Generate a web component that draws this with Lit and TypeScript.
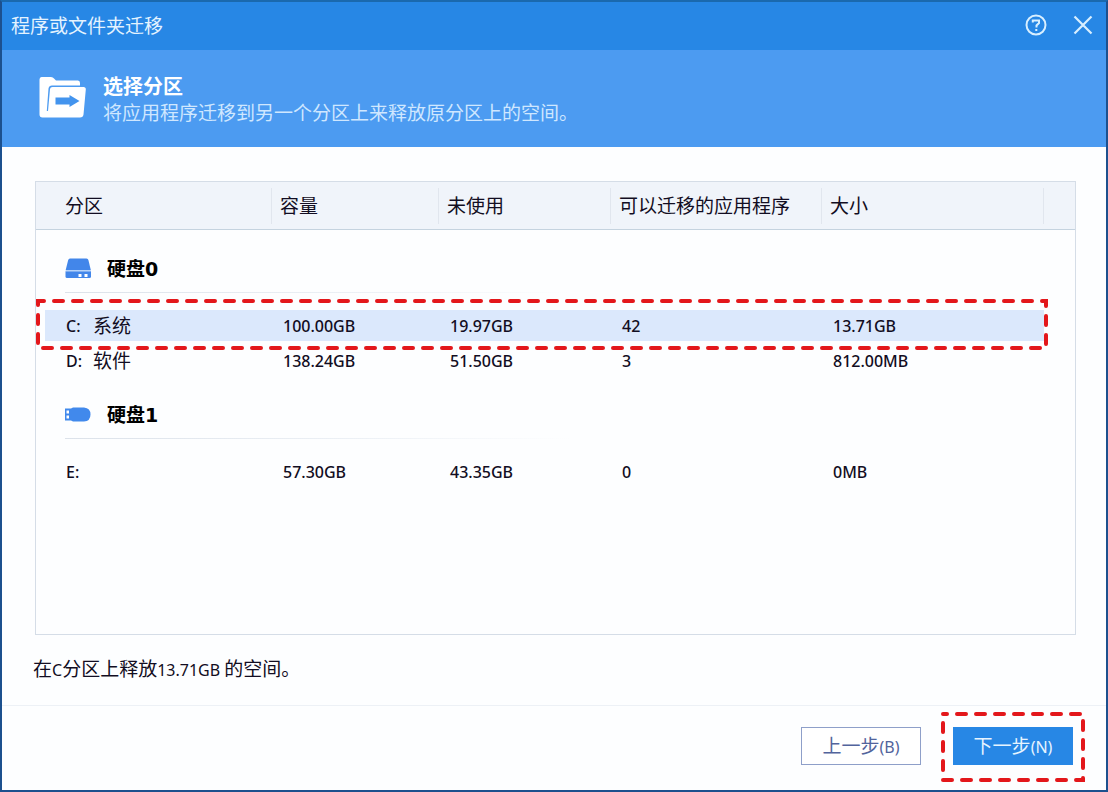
import { LitElement, html, css, svg } from "lit";
import { customElement, property, state } from "lit/decorators.js";

interface Volume {
  letter: string;
  label: string;
  capacity: string;
  unused: string;
  apps: string;
  size: string;
}

interface Disk {
  name: string;
  kind: "internal" | "removable";
  volumes: Volume[];
}

const DISKS: Disk[] = [
  {
    name: "硬盘0",
    kind: "internal",
    volumes: [
      { letter: "C:", label: "系统", capacity: "100.00GB", unused: "19.97GB", apps: "42", size: "13.71GB" },
      { letter: "D:", label: "软件", capacity: "138.24GB", unused: "51.50GB", apps: "3", size: "812.00MB" },
    ],
  },
  {
    name: "硬盘1",
    kind: "removable",
    volumes: [{ letter: "E:", label: "", capacity: "57.30GB", unused: "43.35GB", apps: "0", size: "0MB" }],
  },
];

/* Dashed red frame that surrounds whatever it is placed in. */
@customElement("dashed-frame")
export class DashedFrame extends LitElement {
  @property({ type: Number }) phase = 0;

  static styles = css`
    :host {
      display: block;
      pointer-events: none;
    }
    .frame {
      display: block;
      width: 100%;
      height: 100%;
      overflow: visible;
    }
    .line {
      fill: none;
      stroke: #e3171b;
      stroke-width: 4;
      stroke-linecap: round;
      stroke-dasharray: 9 10;
    }
  `;

  render() {
    return html`<svg class="frame" aria-hidden="true">
      ${svg`<rect class="line" width="100%" height="100%" stroke-dashoffset=${this.phase} />`}
    </svg>`;
  }
}

@customElement("app-root")
export class AppRoot extends LitElement {
  @state() private selected = "C:";

  static styles = css`
    :host {
      display: block;
      font-family: "Noto Sans", "Noto Sans CJK SC", sans-serif;
      font-size: 19px;
      line-height: 24px;
      color: #120d22;
    }
    .window {
      box-sizing: border-box;
      min-height: 100vh;
      display: flex;
      flex-direction: column;
      background: #fdfeff;
      border: 2px solid #1c508e;
      border-top-color: #1a69ae;
    }
    .titlebar {
      height: 48px;
      display: flex;
      align-items: center;
      justify-content: space-between;
      padding: 0 9px;
      background: #2787e5;
      color: #e4f3ff;
    }
    .title {
      margin: 0;
      font-size: 19px;
      font-weight: 400;
    }
    .tools {
      display: flex;
      gap: 19px;
      padding-bottom: 2px;
    }
    .tool {
      width: 28px;
      height: 28px;
      padding: 0;
      border: 0;
      background: none;
      color: #d8efff;
      display: grid;
      place-items: center;
    }
    .banner {
      height: 97px;
      box-sizing: border-box;
      display: flex;
      align-items: center;
      gap: 16px;
      padding: 2px 36px 0 35px;
      background: #4c9bf1;
      color: #cfe7ff;
    }
    .folder {
      padding-bottom: 6px;
    }
    .heading {
      margin: 0;
      font-size: 20px;
      line-height: 26px;
      font-weight: 700;
      color: #fff;
    }
    .lead {
      margin: 0;
      line-height: 26px;
    }
    .content {
      flex: 1;
      display: flex;
      flex-direction: column;
      padding: 34px 30px 0 33px;
    }
    .list {
      flex: 1;
      border: 1px solid #d5dde7;
    }
    .table {
      width: 100%;
      table-layout: fixed;
      border-collapse: separate;
      border-spacing: 0;
    }
    .c-name {
      width: 236px;
    }
    .c-capacity {
      width: 167px;
    }
    .c-unused {
      width: 172px;
    }
    .c-apps {
      width: 211px;
    }
    .c-end {
      width: 31px;
    }
    .head {
      height: 47px;
      padding: 0 8px;
      text-align: left;
      font-weight: 400;
      white-space: nowrap;
      background:
        linear-gradient(#e1e6ee, #e1e6ee) right center / 1px 36px no-repeat,
        #f0f4fa;
      border-bottom: 1px solid #c5d3df;
    }
    .head:first-child {
      padding-left: 29px;
    }
    .head:last-child {
      background: #f0f4fa;
    }
    .disk-cell {
      height: 76px;
      box-sizing: border-box;
      padding: 14px 0 0 29px;
      text-align: left;
      vertical-align: top;
      font-weight: 400;
    }
    .disk {
      display: flex;
      align-items: center;
      gap: 15px;
      height: 46px;
      border-bottom: 1px solid;
      border-image: linear-gradient(90deg, #dce2ea, #edf1f6 30%, transparent 50%) 1;
      font-family: "DejaVu Sans", "Noto Sans CJK SC", sans-serif;
      font-weight: 700;
      color: #000;
    }
    .spacer {
      height: 2px;
      padding: 0;
    }
    .row {
      position: relative;
    }
    .cell {
      height: 35px;
      box-sizing: border-box;
      padding: 0 11px;
      border: solid transparent;
      border-width: 2px 0;
      background-clip: padding-box;
      text-align: left;
      font-size: 16px;
      font-weight: 500;
      white-space: nowrap;
    }
    .cell:first-child {
      border-left-width: 9px;
      padding-left: 21px;
    }
    .row.selected .cell:not(:last-child) {
      background-color: #dbe8fc;
    }
    .volume {
      display: flex;
      align-items: center;
    }
    .letter {
      width: 27px;
    }
    .label {
      font-size: 19px;
      font-weight: 400;
    }
    .mark-row {
      position: absolute;
      inset: -7px 29px -5px 2px;
    }
    .status {
      margin: 0;
      padding: 22px 0 23px;
      margin-left: -2px;
    }
    .latin {
      font-size: 16px;
    }
    .footer {
      display: flex;
      justify-content: flex-end;
      gap: 32px;
      padding: 21px 33px 25px;
      border-top: 1px solid #edf1f6;
    }
    .slot {
      position: relative;
    }
    .mark-button {
      position: absolute;
      inset: -13px -10px -15px;
    }
    .button {
      width: 120px;
      height: 38px;
      box-sizing: border-box;
      padding: 0;
      border: 1px solid #8e9fc9;
      background: #fff;
      color: #52649c;
      font-family: inherit;
      font-size: 19px;
      line-height: 24px;
    }
    .button.primary {
      border-color: #2787e5;
      background: #2787e5;
      color: #e6f4ff;
    }
  `;

  private diskIcon(kind: Disk["kind"]) {
    return kind === "internal"
      ? html`<svg width="27" height="22" viewBox="0 0 27 22" aria-hidden="true">
          <path d="M5 0.500H21.500Q23 0.500 23.400 2L25.800 12H0.700L3.200 2Q3.600 0.500 5 0.500Z" fill="#4286ea" />
          <path d="M0.500 13.200H26V18.500Q26 20 24.500 20H2Q0.500 20 0.500 18.500Z" fill="#4286ea" />
          <path d="M0.700 12H25.800V13.200H0.700Z" fill="#b5d3fa" />
          <path d="M13.500 16h3v3h-3zM19.500 16h3v3h-3z" fill="#fff" />
        </svg>`
      : html`<svg width="27" height="22" viewBox="0 0 27 22" aria-hidden="true">
          <path d="M0 4.500H6L8 3.500H19Q25.500 4 25.500 10.500T19 17.500H8L6 16.500H0Z" fill="#4189ec" />
          <path d="M1.500 6.500h2.500v3h-2.500zM1.500 11.500h2.500v3h-2.500z" fill="#fff" />
        </svg>`;
  }

  private volumeRow(v: Volume) {
    const on = v.letter === this.selected;
    return html`<tr class="row ${on ? "selected" : ""}" @click=${() => (this.selected = v.letter)}>
      <td class="cell"><span class="volume"><span class="letter">${v.letter}</span><span class="label">${v.label}</span></span></td>
      <td class="cell">${v.capacity}</td>
      <td class="cell">${v.unused}</td>
      <td class="cell">${v.apps}</td>
      <td class="cell">${v.size}</td>
      <td class="cell">${on ? html`<dashed-frame class="mark-row" .phase=${3}></dashed-frame>` : ""}</td>
    </tr>`;
  }

  render() {
    return html`
      <main class="window">
        <header class="titlebar">
          <h1 class="title">程序或文件夹迁移</h1>
          <div class="tools">
            <button class="tool" type="button" aria-label="帮助">
              <svg width="22" height="22" viewBox="0 0 22 22" fill="none" stroke="currentColor" stroke-width="2" aria-hidden="true">
                <circle cx="11" cy="11" r="9.500" />
                <path d="M7.800 8.500V6.500H14V9L11.500 11.500V13.500M11.300 15V17" />
              </svg>
            </button>
            <button class="tool" type="button" aria-label="关闭">
              <svg width="20" height="20" viewBox="0 0 20 20" fill="none" stroke="currentColor" stroke-width="2.200" aria-hidden="true">
                <path d="M1.500 1.500L18.500 18.500M18.500 1.500L1.500 18.500" />
              </svg>
            </button>
          </div>
        </header>
        <section class="banner">
          <svg class="folder" width="50" height="44" viewBox="0 0 50 44" aria-hidden="true">
            <path d="M4.500 2H14Q16 2 17 3.500L19 5.500H41Q43 5.500 43 8V10.500H15Q12 10.500 11.500 13.500L9.800 36H11L13 14Q13.300 12 15.500 12H46.500Q49 12 48.800 14.500L46.500 39.500Q46.200 42.500 43 42.500H5.500Q2.500 42.500 2.500 39.500V4.500Q2.500 2 4.500 2Z" fill="#fff" />
            <path d="M18.500 22.500H32.500V20L42.500 26L32.500 32V29.500H18.500Z" fill="#4394ee" />
          </svg>
          <div>
            <h2 class="heading">选择分区</h2>
            <p class="lead">将应用程序迁移到另一个分区上来释放原分区上的空间。</p>
          </div>
        </section>
        <section class="content">
          <div class="list">
            <table class="table">
              <colgroup>
                <col class="c-name" />
                <col class="c-capacity" />
                <col class="c-unused" />
                <col class="c-apps" />
                <col />
                <col class="c-end" />
              </colgroup>
              <thead>
                <tr>
                  <th class="head" scope="col">分区</th>
                  <th class="head" scope="col">容量</th>
                  <th class="head" scope="col">未使用</th>
                  <th class="head" scope="col">可以迁移的应用程序</th>
                  <th class="head" scope="col">大小</th>
                  <td class="head"></td>
                </tr>
              </thead>
              <tbody>
                <tr><td class="spacer" colspan="6"></td></tr>
                ${DISKS.map(
                  (d) => html`<tr>
                      <th class="disk-cell" colspan="6" scope="rowgroup">
                        <div class="disk">${this.diskIcon(d.kind)}<span>${d.name}</span></div>
                      </th>
                    </tr>
                    ${d.volumes.map((v) => this.volumeRow(v))}`
                )}
              </tbody>
            </table>
          </div>
          <p class="status">在<span class="latin">C</span>分区上释放<span class="latin">13.71GB </span>的空间。</p>
        </section>
        <footer class="footer">
          <div class="slot">
            <button class="button" type="button">上一步<span class="latin">(B)</span></button>
          </div>
          <div class="slot">
            <button class="button primary" type="button">下一步<span class="latin">(N)</span></button>
            <dashed-frame class="mark-button" .phase=${5}></dashed-frame>
          </div>
        </footer>
      </main>
    `;
  }
}
